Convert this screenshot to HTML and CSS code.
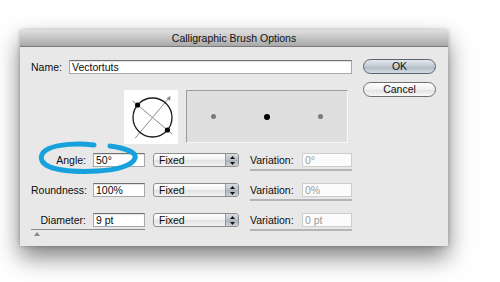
FILE: index.html
```html
<!DOCTYPE html>
<html lang="en">
<head>
    <meta charset="UTF-8">
    <title>Calligraphic Brush Options</title>
    <link rel="stylesheet" href="styles.css">
</head>
<body>
    <div class="dialog">
        <div class="titlebar">Calligraphic Brush Options</div>
        <div class="content">
            <div class="main">
                <div class="name-row">
                    <span class="label">Name:</span>
                    <div class="field name-field">Vectortuts</div>
                </div>

                <div class="preview-row">
                    <div class="angle-preview">
                        <svg width="54" height="54" viewBox="0 0 54 54">
                            <line x1="8.6" y1="10.8" x2="48.4" y2="44.2" stroke="#8a8a8a" stroke-width="1"/>
                            <line x1="11.1" y1="48.2" x2="45.4" y2="7.4" stroke="#8a8a8a" stroke-width="1"/>
                            <polygon points="46.6,5.9 46,11 42.6,8.1" fill="#8a8a8a"/>
                            <circle cx="28.5" cy="27.5" r="19.5" fill="none" stroke="#1c1c1c" stroke-width="1.3"/>
                            <circle cx="13.6" cy="15" r="2.6" fill="#000"/>
                            <circle cx="43.4" cy="40" r="2.6" fill="#000"/>
                        </svg>
                    </div>
                    <div class="dot-preview">
                        <span class="dot"></span>
                        <span class="dot dot-main"></span>
                        <span class="dot"></span>
                    </div>
                </div>

                <div class="opt-row">
                    <span class="label opt-label">Angle:</span>
                    <div class="field opt-field">50°</div>
                    <div class="select">
                        <span class="select-text">Fixed</span>
                        <span class="stepper">
                            <svg width="5" height="9" viewBox="0 0 5 9"><polygon points="2.5,0 5,3 0,3" fill="#111"/><polygon points="0,6 5,6 2.5,9" fill="#111"/></svg>
                        </span>
                    </div>
                    <div class="variation">
                        <span class="var-label">Variation:</span>
                        <div class="field var-field">0°</div>
                    </div>
                </div>

                <div class="opt-row">
                    <span class="label opt-label">Roundness:</span>
                    <div class="field opt-field">100%</div>
                    <div class="select">
                        <span class="select-text">Fixed</span>
                        <span class="stepper">
                            <svg width="5" height="9" viewBox="0 0 5 9"><polygon points="2.5,0 5,3 0,3" fill="#111"/><polygon points="0,6 5,6 2.5,9" fill="#111"/></svg>
                        </span>
                    </div>
                    <div class="variation">
                        <span class="var-label">Variation:</span>
                        <div class="field var-field">0%</div>
                    </div>
                </div>

                <div class="opt-row">
                    <div class="slider-group">
                        <span class="label opt-label">Diameter:</span>
                        <div class="field opt-field">9 pt</div>
                    </div>
                    <div class="select">
                        <span class="select-text">Fixed</span>
                        <span class="stepper">
                            <svg width="5" height="9" viewBox="0 0 5 9"><polygon points="2.5,0 5,3 0,3" fill="#111"/><polygon points="0,6 5,6 2.5,9" fill="#111"/></svg>
                        </span>
                    </div>
                    <div class="variation">
                        <span class="var-label">Variation:</span>
                        <div class="field var-field">0 pt</div>
                    </div>
                </div>
            </div>

            <div class="buttons">
                <div class="btn btn-default">OK</div>
                <div class="btn">Cancel</div>
            </div>
        </div>
    </div>

    <!-- hand drawn highlight round the Angle label -->
    <svg class="highlight" width="102" height="38" viewBox="0 0 102 38">
        <path d="M72 5 C88 7, 99 12, 97 17 C95 24, 80 29, 60 30 C40 31, 18 30, 8 24 C1 19, 2 12, 10 8 C20 3, 40 2, 56 4"
              fill="none" stroke="#17a2dd" stroke-width="5" stroke-linecap="round"/>
    </svg>
</body>
</html>
```

FILE: styles.css
```css
body {
    margin: 0;
    padding: 30px 0 0 20px;
    width: 480px;
    height: 252px;
    overflow: hidden;
    position: relative;
    background-color: #ffffff;
    font-family: "Liberation Sans", Arial, sans-serif;
    font-size: 10.5px;
    color: #0d0d0d;
}

.dialog {
    width: 428px;
    height: 216px;
    background-color: #e8e8e8;
    box-shadow: 0 11px 22px rgba(0, 0, 0, 0.5), 0 0 4px rgba(0, 0, 0, 0.25);
}

.titlebar {
    height: 16px;
    line-height: 17px;
    border-bottom: 1px solid #7a7a7a;
    background: linear-gradient(#e0e0e0, #a8a8a8);
    text-align: center;
    color: #111;
}

.content {
    display: flex;
    padding: 13px 0 0 11px;
}

.main {
    width: 321px;
}

.name-row {
    display: flex;
    justify-content: space-between;
    align-items: center;
    height: 14px;
}

.field {
    box-sizing: border-box;
    height: 14px;
    line-height: 12px;
    padding-left: 2px;
    background-color: #ffffff;
    border: 1px solid #a8a8a8;
    border-top-color: #707070;
    box-shadow: inset 0 1px 1px rgba(0, 0, 0, 0.12);
}

.name-field {
    width: 283px;
}

.preview-row {
    display: flex;
    gap: 8px;
    margin: 16px 0 0 93px;
}

.angle-preview {
    width: 54px;
    height: 54px;
    background-color: #ffffff;
}

.angle-preview svg {
    display: block;
}

.dot-preview {
    box-sizing: border-box;
    width: 162px;
    height: 53px;
    background-color: #dfdfdf;
    border-top: 1px solid #9a9a9a;
    border-left: 1px solid #9a9a9a;
    border-right: 1px solid #f6f6f6;
    border-bottom: 1px solid #f6f6f6;
    display: flex;
    justify-content: center;
    align-items: center;
    gap: 48px;
}

.dot {
    width: 5px;
    height: 5px;
    border-radius: 50%;
    background-color: #7a7a7a;
}

.dot-main {
    width: 6px;
    height: 6px;
    background-color: #000000;
}

.opt-row {
    display: flex;
    align-items: flex-start;
    height: 14px;
    margin-top: 16px;
}

.preview-row + .opt-row {
    margin-top: 9px;
}

.label {
    line-height: 14px;
}

.opt-label {
    width: 55px;
    text-align: right;
}

.opt-field {
    width: 52px;
    margin-left: 7px;
}

.slider-group {
    display: flex;
    position: relative;
    height: 14px;
    padding-bottom: 2px;
    border-bottom: 1px solid #8a8a8a;
}

.slider-group::after {
    content: "";
    position: absolute;
    left: 3px;
    top: 19px;
    width: 0;
    height: 0;
    border-left: 3px solid transparent;
    border-right: 3px solid transparent;
    border-bottom: 4px solid #8a8a8a;
}

.select {
    box-sizing: border-box;
    display: flex;
    width: 86px;
    height: 14px;
    margin-left: 8px;
    border: 1px solid #8e8e8e;
    border-radius: 3px;
    background: linear-gradient(#ffffff, #f1f1f1 50%, #e2e2e2 51%, #f4f4f4);
    overflow: hidden;
}

.select-text {
    flex: 1;
    padding-left: 5px;
    line-height: 12px;
}

.stepper {
    width: 12px;
    display: flex;
    justify-content: center;
    align-items: center;
    border-left: 1px solid #9a9a9a;
    background: linear-gradient(#d8dde3, #b9c0c8 50%, #a9b1ba 51%, #ccd2d8);
}

.stepper svg {
    display: block;
}

.variation {
    display: flex;
    margin-left: 11px;
    padding-bottom: 2px;
    border-bottom: 2px solid #b4b4b4;
}

.var-label {
    width: 44px;
    line-height: 14px;
}

.var-field {
    width: 50px;
    margin-left: 8px;
    color: #9b9b9b;
    background-color: #fbfbfb;
    border-color: #cdcdcd;
    box-shadow: none;
}

.buttons {
    width: 73px;
    margin: -1px 0 0 11px;
    display: flex;
    flex-direction: column;
    gap: 8px;
}

.btn {
    box-sizing: border-box;
    height: 15px;
    line-height: 13px;
    text-align: center;
    border: 1px solid #6e6e6e;
    border-radius: 8px;
    background: linear-gradient(#ffffff, #f0f0f0 50%, #e0e0e0 51%, #f8f8f8);
    color: #111;
}

.btn-default {
    border-color: #59636e;
    background: linear-gradient(#e3e8ed, #c0c9d2 50%, #aeb8c3 51%, #d5dce3);
}

.highlight {
    position: absolute;
    left: 38px;
    top: 141px;
}
```
